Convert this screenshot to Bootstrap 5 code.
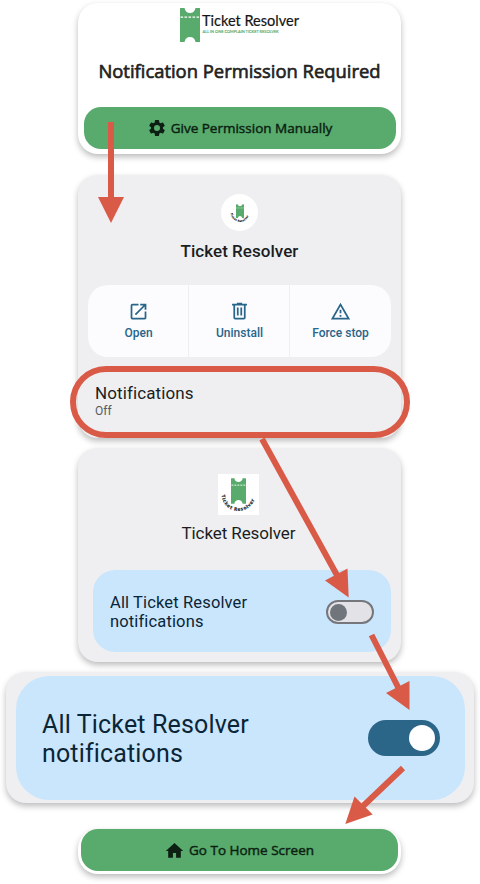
<!DOCTYPE html>
<html lang="en">
<head>
<meta charset="utf-8">
<meta name="viewport" content="width=device-width, initial-scale=1">
<title>Ticket Resolver – Notification Permission</title>
<link href="https://cdn.jsdelivr.net/npm/bootstrap@5.3.0/dist/css/bootstrap.min.css" rel="stylesheet">
<style>
body{background:#fff;font-family:Roboto,"Noto Sans",sans-serif;color:#1b1d1f;overflow:hidden}
.guide{width:479px;height:884px;padding-top:3px}
.panel{width:323px;border-radius:20px;box-shadow:0 3px 6px rgba(0,0,0,.27);flex:none}
.panel-gray{background:#efeff1}
.open{font-family:"Open Sans","Noto Sans",sans-serif}
.logo-row{padding-top:5px;padding-left:101px;height:39px}
.ask{font-size:18.400px;line-height:24px;margin-top:17px;color:#222;-webkit-text-stroke:.65px #222;white-space:nowrap}
.green-btn,.green-btn:hover{background:#58ab6c;color:#0c1f12;border:0;font-size:13.500px;line-height:20px;height:42px;border-radius:17px;-webkit-text-stroke:.45px #0c1f12;white-space:nowrap}
.app-dot{width:37px;height:37px;background:#fff;margin-top:19px}
.app-title{font-size:17px;line-height:20px}
.actions{background:#fcfcfe;border-radius:20px;height:72px;width:303px;margin-top:24px;overflow:hidden;color:#28658a;font-size:12px;font-weight:500}
.actions>div+div{box-shadow:-1px 0 0 #efeff2}
.actions span{margin-top:2px}
.ring{width:340px;height:72px;border:6px solid #d95b47;border-radius:36px;margin:9px 0 0 -8px;padding:11px 0 0 19px}
.tile{background:#c9e6fd;color:#0b2536}
.toggle-off{width:48px;height:24px;border:2px solid #75777c;border-radius:12px;background:#e3e3e7;padding:2px}
.toggle-off i{display:block;width:17px;height:17px;margin-top:-.5px;border-radius:50%;background:#70747b}
.toggle-on{width:72px;height:36px;border-radius:18px;background:#2b6588;padding:5px;margin-top:-2px}
.toggle-on i{display:block;width:26px;height:26px;border-radius:50%;background:#fff}
.flow-arrows{left:0;top:0;pointer-events:none}
</style>
</head>
<body>
<svg width="0" height="0" class="position-absolute" aria-hidden="true">
<symbol id="ticket" viewBox="0 0 20 34"><path fill="#58ab6c" d="M0 .5Q0 0 .5 0H4.500Q5.500 5 10 5T15.500 0H19.500Q20 0 20 .5V33.500Q20 34 19.500 34H15.500Q14.500 29 10 29T4.500 34H.5Q0 34 0 33.500z"/><path stroke="#fff" stroke-width="1.200" stroke-dasharray="2.600 1.400" d="M.5 9.200H20"/></symbol>
</svg>
<main class="guide position-relative d-flex flex-column align-items-center">
  <section class="panel bg-white open d-flex flex-column" style="height:151px">
    <div class="logo-row">
      <svg width="124" height="34" class="d-block"><use href="#ticket" x="1" width="20" height="34"/><text x="23" y="18" font-family="Lato" font-size="14.800" textLength="97" lengthAdjust="spacingAndGlyphs" fill="#151515" stroke="#151515" stroke-width=".2">Ticket Resolver</text><text x="23.500" y="25.300" font-family="Lato" font-size="4.300" textLength="76" lengthAdjust="spacingAndGlyphs" fill="#58ab6c" stroke="#58ab6c" stroke-width=".15">ALL IN ONE COMPLAIN TICKET RESOLVER</text></svg>
    </div>
    <div class="ask text-center">Notification Permission Required</div>
    <button class="btn green-btn mt-auto mx-auto p-0 d-flex align-items-center justify-content-center" style="width:312px;margin-bottom:5px"><svg width="20" height="20" viewBox="0 0 24 24" fill="currentColor"><path d="M19.140 12.940c.04-.3.06-.61.06-.94s-.02-.64-.07-.94l2.030-1.580c.18-.14.23-.41.12-.61l-1.920-3.320c-.12-.22-.37-.29-.59-.22l-2.390.96c-.5-.38-1.030-.7-1.620-.94l-.36-2.540A.48.48 0 0 0 13.920 2.400h-3.840c-.24 0-.43.17-.47.41l-.36 2.540c-.59.24-1.130.57-1.620.94l-2.390-.96c-.22-.08-.47 0-.59.22L2.740 8.870c-.12.21-.08.47.12.61l2.030 1.580c-.05.3-.09.63-.09.94s.02.64.07.94l-2.030 1.580c-.18.14-.23.41-.12.61l1.920 3.320c.12.22.37.29.59.22l2.390-.96c.5.38 1.030.7 1.620.94l.36 2.540c.05.24.24.41.48.41h3.840c.24 0 .44-.17.47-.41l.36-2.540c.59-.24 1.130-.56 1.620-.94l2.390.96c.22.08.47 0 .59-.22l1.920-3.320c.12-.22.07-.47-.12-.61zM12 15.600a3.600 3.600 0 1 1 0-7.200 3.600 3.600 0 0 1 0 7.200z"/></svg><span class="ms-1">Give Permission Manually</span></button>
  </section>

  <section class="panel panel-gray d-flex flex-column" style="height:263px;margin-top:21px">
    <div class="app-dot rounded-circle mx-auto d-flex align-items-center justify-content-center"><svg width="22" height="22" viewBox="0 0 41 41"><use href="#ticket" x="13" y="4" width="15" height="26"/><path id="arc-small" d="M3.500 20A17 17 0 0 0 37.500 20" fill="none"/><text font-family="Open Sans" font-size="4.900" font-weight="700" letter-spacing=".65" fill="#222" stroke="#222" stroke-width=".3"><textPath href="#arc-small" startOffset="1">Ticket Resolver</textPath></text></svg></div>
    <div class="app-title text-center" style="margin-top:10px;font-weight:500;letter-spacing:.04px">Ticket Resolver</div>
    <div class="actions d-flex mx-auto flex-shrink-0">
      <div class="col-4 d-flex flex-column align-items-center pt-3"><svg width="21" height="21" viewBox="0 0 24 24" fill="currentColor"><path d="M19 19H5V5h7V3H5a2 2 0 0 0-2 2v14a2 2 0 0 0 2 2h14c1.100 0 2-.9 2-2v-7h-2zM14 3v2h3.590l-9.830 9.830 1.410 1.410L19 6.410V10h2V3z"/></svg><span>Open</span></div>
      <div class="col-4 d-flex flex-column align-items-center pt-3"><svg width="21" height="21" viewBox="0 0 24 24" fill="currentColor"><path d="M15 3V2H9v1H3.500v2H5v14a2 2 0 0 0 2 2h10a2 2 0 0 0 2-2V5h1.500V3zm2 16H7V5h10zM9 7.500h2v9H9zm4 0h2v9h-2z"/></svg><span>Uninstall</span></div>
      <div class="col-4 d-flex flex-column align-items-center pt-3"><svg width="21" height="21" viewBox="0 0 24 24" fill="currentColor"><path d="M12 5.990 19.530 19H4.470zM12 2 1 21h22zm1 14h-2v2h2zm0-6h-2v4h2z"/></svg><span>Force stop</span></div>
    </div>
    <div class="ring flex-shrink-0">
      <div style="font-size:17px;line-height:20px;letter-spacing:.1px">Notifications</div>
      <div style="font-size:12px;line-height:16px;color:#555b61">Off</div>
    </div>
  </section>

  <section class="panel panel-gray d-flex flex-column align-items-center" style="height:214px;margin-top:10px">
    <div class="bg-white" style="width:41px;height:41px;margin:26px 2px 0 0"><svg width="41" height="41" class="d-block"><use href="#ticket" x="13" y="4" width="15" height="26"/><path id="arc" d="M3.500 20A17 17 0 0 0 37.500 20" fill="none"/><text font-family="Open Sans" font-size="4.900" font-weight="700" letter-spacing=".65" fill="#222" stroke="#222" stroke-width=".15"><textPath href="#arc" startOffset="1">Ticket Resolver</textPath></text></svg></div>
    <div class="app-title text-center" style="margin-top:8px;letter-spacing:-.1px;padding-right:2px">Ticket Resolver</div>
    <div class="tile d-flex align-items-center justify-content-between" style="width:298px;height:82px;border-radius:22px;margin:27px 0 0 5px;padding:2px 17px 0">
      <div style="font-size:16.500px;line-height:19.500px;letter-spacing:.14px">All Ticket Resolver<br>notifications</div>
      <div class="toggle-off"><i></i></div>
    </div>
  </section>

  <section class="panel panel-gray d-flex justify-content-center align-items-center" style="width:468px;height:131px;margin-top:10px">
    <div class="tile d-flex align-items-center justify-content-between" style="width:449px;height:124px;border-radius:33px;margin-left:2px;padding:2px 25px 0 26px">
      <div style="font-size:25px;line-height:29.500px;letter-spacing:.15px;padding-top:1px">All Ticket Resolver<br>notifications</div>
      <div class="toggle-on d-flex justify-content-end align-items-center"><i></i></div>
    </div>
  </section>

  <section class="panel bg-white open" style="height:45px;margin-top:26px;padding:0 3px">
    <button class="btn green-btn w-100 p-0 d-flex align-items-center justify-content-center"><svg width="19" height="19" viewBox="0 0 24 24" fill="currentColor"><path d="M10 21v-6h4v6h6v-8.500h3L12 2.500 1 12.500h3V21z"/></svg><span style="margin-left:5px">Go To Home Screen</span></button>
  </section>

  <svg class="flow-arrows position-absolute" width="479" height="884" fill="#d95b47" stroke="#d95b47">
    <g stroke-width="6" fill="none"><path d="M111 122V199M262 439 338 577M371.500 635 399 689M403 768 361 808"/></g>
    <g stroke="none"><path d="M98 197h26l-13 26zM325 580.500 347.500 568.500 348.700 597.500zM386 693 409.500 681V710zM354.500 796.500 372.700 814.500 345.300 824z"/></g>
  </svg>
</main>
<script src="https://cdn.jsdelivr.net/npm/bootstrap@5.3.0/dist/js/bootstrap.bundle.min.js"></script>
</body>
</html>
